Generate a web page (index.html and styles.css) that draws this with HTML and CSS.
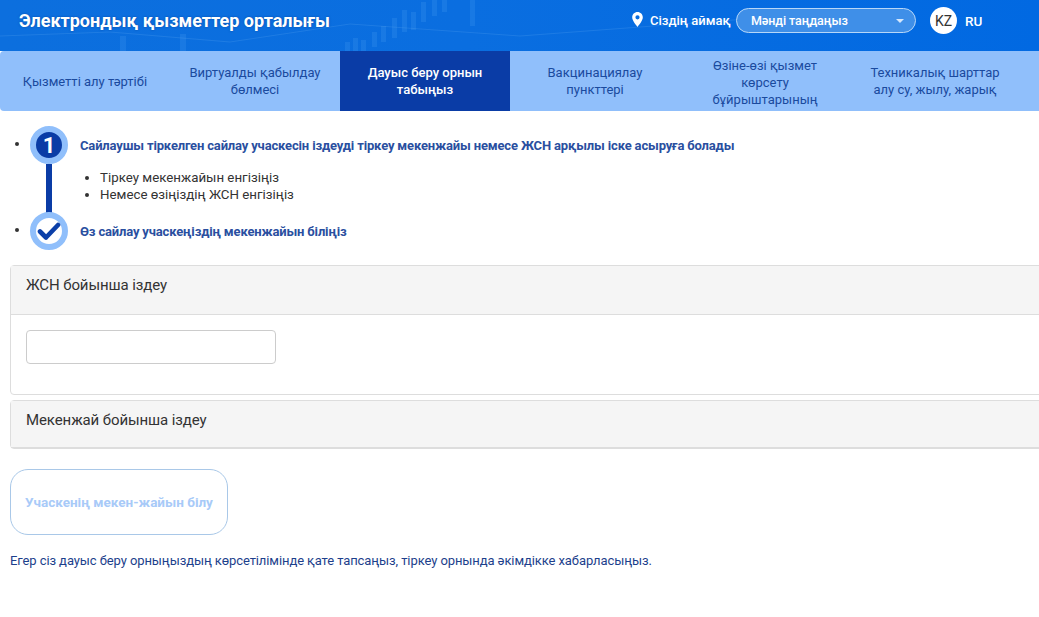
FILE: index.html
```html
<!DOCTYPE html>
<html lang="kk">
<head>
<meta charset="utf-8">
<title>Электрондық қызметтер орталығы</title>
<link rel="stylesheet" href="styles.css">
</head>
<body>
<div class="page">
  <header class="top">
    <svg class="top-art" width="1039" height="51" viewBox="0 0 1039 51" aria-hidden="true">
      <g fill="#4ba0f2" opacity=".22">
        <rect x="345" y="42" width="5" height="9"/><rect x="353" y="38" width="5" height="13"/><rect x="361" y="40" width="5" height="11"/>
        <rect x="372" y="32" width="5" height="15"/><rect x="381" y="26" width="5" height="16"/><rect x="392" y="18" width="5" height="20"/>
        <rect x="402" y="10" width="5" height="22"/><rect x="411" y="12" width="5" height="18"/><rect x="421" y="2" width="5" height="20"/>
        <rect x="432" y="0" width="5" height="16"/><rect x="442" y="0" width="5" height="12"/><rect x="470" y="0" width="5" height="26"/>
        <rect x="120" y="36" width="6" height="15"/><rect x="180" y="34" width="6" height="17"/>
      </g>
      <path d="M0 36 L110 32 L230 42 L350 24 L520 36 L760 18" stroke="#6db4f7" stroke-width="1" fill="none" opacity=".2"/>
    </svg>
    <div class="brand">Электрондық қызметтер орталығы</div>
    <div class="region">
      <svg class="pin" width="11" height="15" viewBox="0 0 11 15" aria-hidden="true"><path fill-rule="evenodd" fill="#fff" d="M5.5 0C2.5 0 .2 2.3.2 5.2c0 3.600 4.300 8.200 5.300 9.800 1-1.600 5.300-6.200 5.300-9.800C10.800 2.300 8.500 0 5.500 0zm0 3.200a2.100 2.100 0 1 1 0 4.200 2.100 2.100 0 0 1 0-4.200z"/></svg>
      <span class="region-label">Сіздің аймақ</span>
      <div class="select"><span>Мәнді таңдаңыз</span><i class="caret"></i></div>
    </div>
    <div class="langs"><span class="lang-on">KZ</span><span class="lang">RU</span></div>
  </header>

  <nav class="tabs">
    <a class="tab">Қызметті алу тәртібі</a>
    <a class="tab">Виртуалды қабылдау бөлмесі</a>
    <a class="tab active">Дауыс беру орнын табыңыз</a>
    <a class="tab">Вакцинациялау пункттері</a>
    <a class="tab clip">Өзіне-өзі қызмет көрсету бұйрыштарының</a>
    <a class="tab">Техникалық шарттар алу су, жылу, жарық</a>
  </nav>

  <main>
    <ul class="steps">
      <li class="step">
        <div class="step-row">
          <span class="badge num">1</span>
          <b class="step-text">Сайлаушы тіркелген сайлау учаскесін іздеуді тіркеу мекенжайы немесе ЖСН арқылы іске асыруға болады</b>
        </div>
        <i class="connector"></i>
        <ul class="sub">
          <li>Тіркеу мекенжайын енгізіңіз</li>
          <li>Немесе өзіңіздің ЖСН енгізіңіз</li>
        </ul>
      </li>
      <li class="step">
        <div class="step-row">
          <span class="badge check">
            <svg width="24" height="20" viewBox="0 0 24 20" aria-hidden="true"><path d="M3 10.500l6 6L21 4" fill="none" stroke="#0b3fa8" stroke-width="4.600" stroke-linecap="round" stroke-linejoin="round"/></svg>
          </span>
          <b class="step-text">Өз сайлау учаскеңіздің мекенжайын біліңіз</b>
        </div>
      </li>
    </ul>

    <section class="panel">
      <div class="panel-head">ЖСН бойынша іздеу</div>
      <div class="panel-body"><input class="field" type="text"></div>
    </section>
    <section class="panel second">
      <div class="panel-head">Мекенжай бойынша іздеу</div>
    </section>

    <button class="find" type="button">Учаскенің мекен-жайын білу</button>
    <p class="note">Егер сіз дауыс беру орныңыздың көрсетілімінде қате тапсаңыз, тіркеу орнында әкімдікке хабарласыңыз.</p>
  </main>
</div>
</body>
</html>
```
FILE: styles.css
```css
* { box-sizing: border-box; }
html, body { margin: 0; padding: 0; background: #fff; }
body { font-family: Roboto, "Noto Sans", sans-serif; color: #333; }
.page { width: 1039px; height: 617px; overflow: hidden; }

.top {
  position: relative;
  height: 51px;
  display: flex;
  align-items: flex-start;
  padding: 8px 0 0 19px;
  background: linear-gradient(90deg, #0c6fde 0%, #0a6ee0 45%, #0169e2 100%);
  color: #fff;
  overflow: hidden;
}
.top-art { position: absolute; left: 0; top: 0; }
.brand {
  position: relative;
  width: 612px;
  font-size: 18px;
  font-weight: 700;
  line-height: 26px;
  text-shadow: 0 0 2px rgba(0, 40, 110, .5);
}
.region { position: relative; display: flex; align-items: center; height: 25px; }
.pin { margin-left: 1px; margin-top: -3px; }
.region-label { margin-left: 7px; width: 86px; font-size: 13px; font-weight: 500; }
.select {
  width: 180px;
  height: 25px;
  display: flex;
  align-items: center;
  justify-content: space-between;
  padding: 0 11px 0 14px;
  border: 1px solid #b7d7f8;
  border-radius: 13px;
  background: #3f8fe8;
  font-size: 12.500px;
  font-weight: 500;
  letter-spacing: -.1px;
}
.caret { width: 0; height: 0; border: 4px solid transparent; border-top: 4px solid #d5e7fb; border-bottom: 0; }
.langs { position: relative; display: flex; align-items: center; margin-left: 14px; margin-top: -1px; }
.lang-on {
  width: 27px;
  height: 27px;
  border-radius: 50%;
  background: #fff;
  color: #333;
  display: flex;
  align-items: center;
  justify-content: center;
  font-size: 14px;
}
.lang { margin-left: 8px; font-size: 13.500px; font-weight: 500; }

.tabs {
  display: flex;
  height: 60px;
  overflow: hidden;
  background: #90bffb;
  border-radius: 4px 0 0 4px;
}
.tab {
  flex: 0 0 170px;
  height: 60px;
  display: flex;
  align-items: center;
  justify-content: center;
  padding: 0 15px;
  text-align: center;
  font-size: 13px;
  line-height: 17px;
  color: #1a4a9e;
}
.tab.active { background: #0a3ca6; color: #fff; font-weight: 500; padding: 0 20px; }
.tab.clip { align-items: flex-start; padding-top: 6px; }

.steps { margin: 15px 0 0; padding: 0 0 0 30px; color: #333; font-size: 13px; }
.step { position: relative; }
.step-row { display: inline-flex; align-items: center; height: 38px; vertical-align: middle; }
.step-text { margin-left: 12px; color: #2a4fa0; font-size: 13px; font-weight: 700; letter-spacing: -.16px; white-space: nowrap; }
.badge {
  flex: none;
  width: 38px;
  height: 38px;
  border-radius: 50%;
  display: flex;
  align-items: center;
  justify-content: center;
  border: 6px solid #90bffb;
}
.badge.num { background: #0a3ca6; color: #fff; font-size: 22px; font-weight: 700; }
.badge.check { background: #fff; }
.connector { position: absolute; left: 16px; top: 38px; width: 6px; height: 50px; background: #0a3ca6; }
.sub { margin: 5px 0 9px; padding: 0 0 0 70px; line-height: 17px; color: #333; font-size: 13.300px; list-style-type: disc; }

.panel { width: 1100px; margin: 15px 0 0 10px; border: 1px solid #ddd; border-radius: 4px; background: #fff; }
.panel.second { margin-top: 5px; }
.panel-head {
  height: 49px;
  padding: 10px 15px;
  background: #f5f5f5;
  border-bottom: 1px solid #ddd;
  font-size: 15px;
  letter-spacing: -.1px;
  line-height: 18px;
  color: #333;
}
.second .panel-head { height: 47px; }
.panel-body { height: 79px; padding: 15px; }
.field { display: block; width: 250px; height: 34px; border: 1px solid #ccc; border-radius: 4px; background: #fff; }

.find {
  display: block;
  width: 218px;
  height: 66px;
  margin: 20px 0 0 10px;
  padding: 0;
  border: 1px solid #a9c8e8;
  border-radius: 18px;
  background: #fff;
  color: #a8caf8;
  font-family: inherit;
  font-size: 13.500px;
  font-weight: 700;
}
.note { margin: 17px 0 0 10px; color: #1d3f8c; font-size: 13px; letter-spacing: -.09px; line-height: 17px; white-space: nowrap; }
```
